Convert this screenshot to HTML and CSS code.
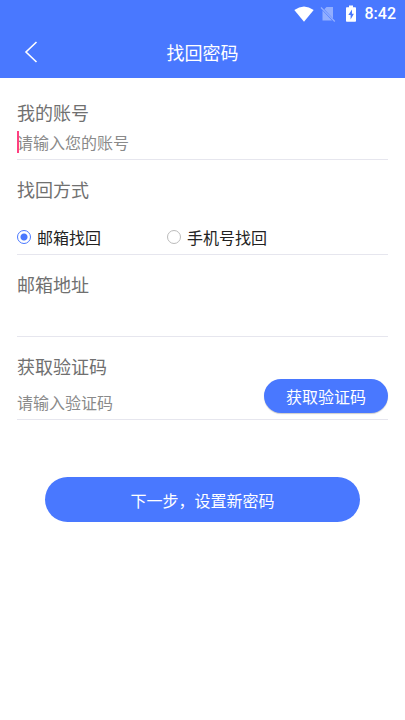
FILE: index.html
```html
<!DOCTYPE html>
<html lang="zh-CN">
<head>
<meta charset="utf-8">
<meta name="viewport" content="width=device-width, initial-scale=1">
<title>找回密码</title>
<link rel="stylesheet" href="styles.css">
</head>
<body>
<header class="top">
  <div class="status">
    <svg width="20" height="16" viewBox="0 0 20 16" aria-hidden="true"><path d="M0.300 4Q10-3.200 19.700 4L10 15.800Z" fill="#fff"/></svg>
    <svg class="sim" width="16" height="16" viewBox="0 0 16 16" aria-hidden="true"><path d="M6.500 1H13v11.500L4.300 3.300zM2.500 4.500L12 14.500H2.500z" fill="#fff"/><path d="M1 1.500l13.800 14" stroke="#fff" stroke-width="1.300"/></svg>
    <svg class="battery" width="12" height="18" viewBox="0 0 12 18" aria-hidden="true"><path d="M4 0.500h4v1.700h2.200q.8 0 .8.800v13q0 .8-.8.800H1.800q-.8 0-.8-.8V3q0-.8.8-.8H4z" fill="#fff"/><path d="M7 4.500L3.300 10h2.300v4.500L8.900 8.800H7z" fill="#4978ff"/></svg>
    <span class="time">8:42</span>
  </div>
  <div class="bar">
    <button class="back" type="button" aria-label="返回"><svg width="14" height="24" viewBox="0 0 14 24" aria-hidden="true"><path d="M12.500 2L2 12l10.500 10" fill="none" stroke="#fff" stroke-width="1.600"/></svg></button>
    <h1 class="title">找回密码</h1>
  </div>
</header>
<main>
  <form class="form">
    <div class="group">
      <label class="label" for="account">我的账号</label>
      <div class="field">
        <input class="text" id="account" type="text" placeholder="请输入您的账号">
        <span class="caret"></span>
      </div>
    </div>
    <fieldset class="group">
      <legend class="label">找回方式</legend>
      <div class="options">
        <label class="option"><input class="radio" type="radio" name="way" checked>邮箱找回</label>
        <label class="option"><input class="radio" type="radio" name="way">手机号找回</label>
      </div>
    </fieldset>
    <div class="group">
      <label class="label" for="email">邮箱地址</label>
      <div class="field tall"><input class="text" id="email" type="email"></div>
    </div>
    <div class="group">
      <label class="label" for="code">获取验证码</label>
      <div class="field code">
        <input class="text" id="code" type="text" placeholder="请输入验证码">
        <button class="send" type="button">获取验证码</button>
      </div>
    </div>
    <button class="next" type="button">下一步，设置新密码</button>
  </form>
</main>
</body>
</html>
```
FILE: styles.css
```css
* {
  box-sizing: border-box;
}

body {
  margin: 0;
  background: #fff;
  color: #222;
  font: 16px/24px "Noto Sans CJK SC", sans-serif;
}

button,
input {
  margin: 0;
  padding: 0;
  border: 0;
  background: none;
  color: inherit;
  font: inherit;
}

.top {
  background: #4978ff;
  color: #fff;
}

.status {
  display: flex;
  align-items: center;
  justify-content: flex-end;
  height: 27px;
  padding-right: 9px;
}

.sim {
  margin-left: 6px;
  opacity: 0.4;
}

.battery {
  margin-left: 9px;
}

.time {
  margin-left: 8px;
  font: 500 16px/24px Roboto, sans-serif;
}

.bar {
  display: grid;
  grid-template-columns: 62px 1fr 62px;
  align-items: center;
  height: 51px;
  padding-bottom: 2px;
}

.back {
  display: grid;
  place-items: center;
  height: 48px;
}

.title {
  margin: 0;
  font-size: 18px;
  font-weight: 400;
  text-align: center;
}

.form {
  padding: 5px 17px 0;
}

.group {
  min-width: 0;
  margin: 0;
  padding: 16px 0 0;
  border: 0;
  border-bottom: 1px solid #e6e6ee;
}

.label {
  display: block;
  float: left;
  width: 100%;
  padding: 0;
  color: #707070;
  font-size: 18px;
  line-height: 26px;
}

.field {
  position: relative;
  display: flex;
  clear: both;
  height: 34px;
}

.tall {
  height: 39px;
}

.text {
  flex: 1;
  min-width: 0;
  outline: 0;
}

.text::placeholder {
  color: #8a8a8a;
  opacity: 1;
}

.caret {
  position: absolute;
  top: 6px;
  left: 0;
  width: 2px;
  height: 22px;
  background: #ff4081;
}

.options {
  display: grid;
  grid-template-columns: 150px 1fr;
  clear: both;
  padding: 23px 0 5px;
}

.option {
  display: flex;
  align-items: center;
  gap: 6px;
}

.radio {
  width: 14px;
  height: 14px;
  border: 1px solid #bbb;
  border-radius: 50%;
  appearance: none;
}

.radio:checked {
  border-color: #4978ff;
  background: radial-gradient(circle, #4978ff 3px, transparent 4px);
}

.code {
  height: 40px;
}

.code .text {
  padding-top: 6px;
}

.send {
  width: 124px;
  height: 34px;
  border-radius: 17px;
  background: #4978ff;
  box-shadow: 0 1px 1px #0003;
  color: #fff;
}

.next {
  display: block;
  width: calc(100% - 56px);
  height: 45px;
  margin: 57px auto 0;
  border-radius: 23px;
  background: #4978ff;
  color: #fff;
}
```
